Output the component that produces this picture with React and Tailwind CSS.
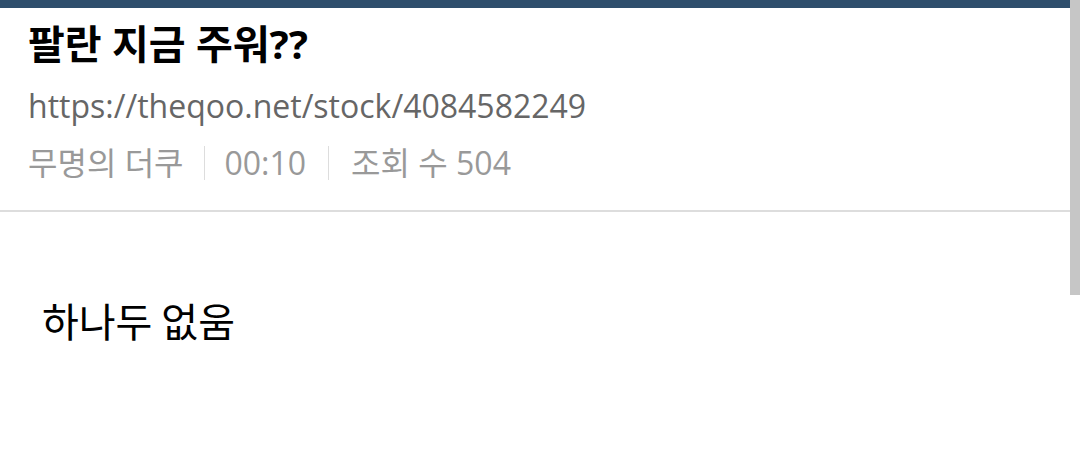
export default function App() {
  return (
    <div className="relative w-[1080px] h-[473px] bg-white overflow-hidden" style={{ fontFamily: '"Noto Sans", "Noto Sans CJK KR", sans-serif' }}>
      <div className="h-[8px] bg-[#2e4e6c]" />
      <div className="pl-[28px] pt-[11px] h-[202px]">
        <div className="text-[40px] font-bold leading-[50px] text-black">팔란 지금 주워??</div>
        <div className="text-[32px] leading-[44px] mt-[15px] text-[#666]" style={{ fontFamily: '"Open Sans", "Noto Sans CJK KR", sans-serif' }}>https://theqoo.net/stock/4084582249</div>
        <div className="flex items-center mt-[13px] text-[32px] leading-[44px] text-[#999]" style={{ fontFamily: '"Open Sans", "Noto Sans CJK KR", sans-serif' }}>
          <span>무명의 더쿠</span>
          <span className="w-px h-[34px] bg-[#ddd] mx-[20px]" />
          <span>00:10</span>
          <span className="w-px h-[34px] bg-[#ddd] mx-[22px]" />
          <span>조회 수 504</span>
        </div>
      </div>
      <div className="h-[2px] bg-[#dddddd]" />
      <div className="pl-[42px] pt-[80px] text-[40px] leading-[56px] text-black" style={{ fontFamily: '"Noto Sans CJK KR", sans-serif' }}>하나두 없움</div>
      <div className="absolute right-0 top-0 w-[10px] h-[295px] bg-[#c6c6c6]" />
    </div>
  );
}
